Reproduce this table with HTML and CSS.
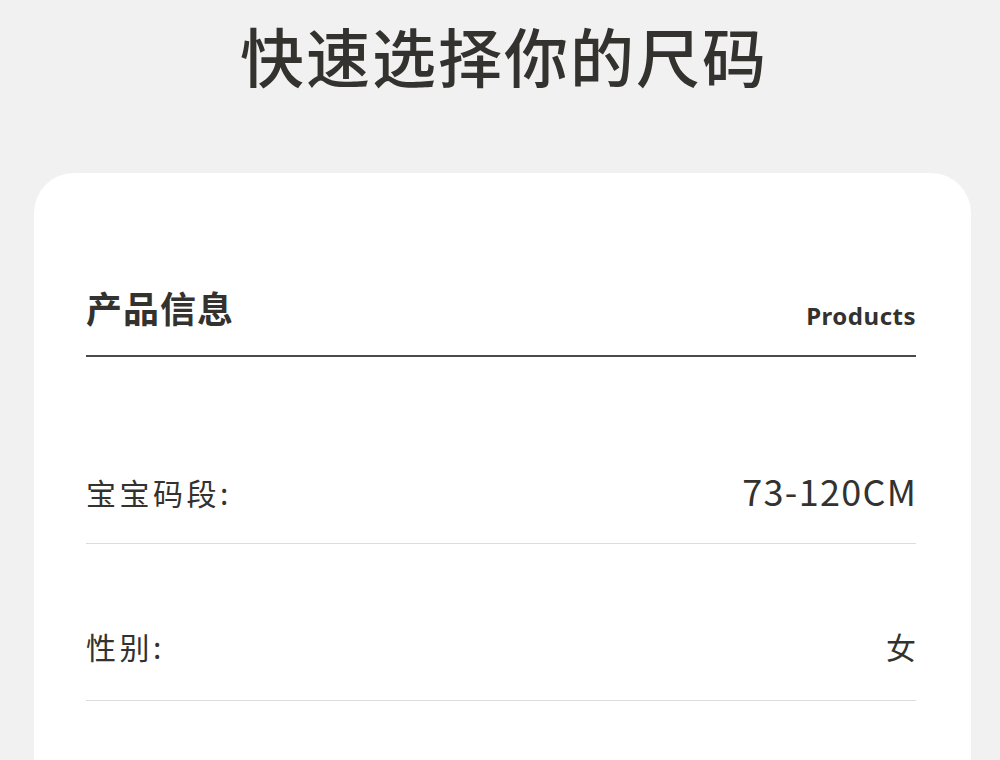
FILE: index.html
```html
<!DOCTYPE html>
<html lang="zh-CN">
<head>
<meta charset="utf-8">
<title>快速选择你的尺码</title>
<link rel="stylesheet" href="styles.css">
</head>
<body>
<div class="page">
  <h1 class="title">快速选择你的尺码</h1>
  <section class="card">
    <div class="card-head">
      <h2 class="head-cn">产品信息</h2>
      <span class="head-en">Products</span>
    </div>
    <div class="row row-first">
      <span class="label">宝宝码段:</span>
      <span class="value value-num">73-120CM</span>
    </div>
    <div class="row row-second">
      <span class="label">性别:</span>
      <span class="value">女</span>
    </div>
    <div class="row">
      <span class="label">&nbsp;</span>
      <span class="value">&nbsp;</span>
    </div>
  </section>
</div>
</body>
</html>
```

FILE: styles.css
```css
html, body {
  margin: 0;
  padding: 0;
  background: #f1f1f1;
}
body {
  font-family: "Noto Sans CJK SC", "Noto Sans", sans-serif;
  color: #33322e;
  overflow: hidden;
}
.page {
  width: 1000px;
  height: 760px;
  overflow: hidden;
}
.title {
  margin: 0;
  padding: 22px 0 0 8px;
  font-size: 64px;
  line-height: 1;
  font-weight: 500;
  letter-spacing: 2px;
  text-align: center;
  color: #33322e;
}
.card {
  margin: 87px 29px 0 34px;
  background: #ffffff;
  border-radius: 40px;
  padding: 116px 55px 0 52px;
  min-height: 700px;
}
.card-head {
  display: flex;
  justify-content: space-between;
  align-items: flex-end;
  border-bottom: 2px solid #4a4a48;
  padding-bottom: 30px;
}
.head-cn {
  margin: 0;
  font-size: 36px;
  line-height: 1;
  font-weight: 700;
  letter-spacing: 1px;
}
.head-en {
  font-family: "Noto Sans", "Open Sans", sans-serif;
  font-size: 24px;
  line-height: 1;
  font-weight: 700;
  letter-spacing: 0.5px;
  margin-bottom: -3px;
}
.row {
  display: flex;
  justify-content: space-between;
  align-items: flex-end;
  height: 156px;
  border-bottom: 1px solid #dcdcdc;
}
.row-first {
  height: 186px;
}
.label, .value {
  margin-bottom: 36px;
}
.row-second .label, .row-second .value {
  margin-bottom: 39px;
}
.label {
  font-size: 30px;
  line-height: 1;
  letter-spacing: 3.5px;
  font-weight: 400;
}
.value {
  font-size: 30px;
  line-height: 1;
  font-weight: 400;
}
.value-num {
  font-size: 36px;
  letter-spacing: 1.3px;
  margin-right: -1.3px;
  margin-bottom: 35px;
}
```
